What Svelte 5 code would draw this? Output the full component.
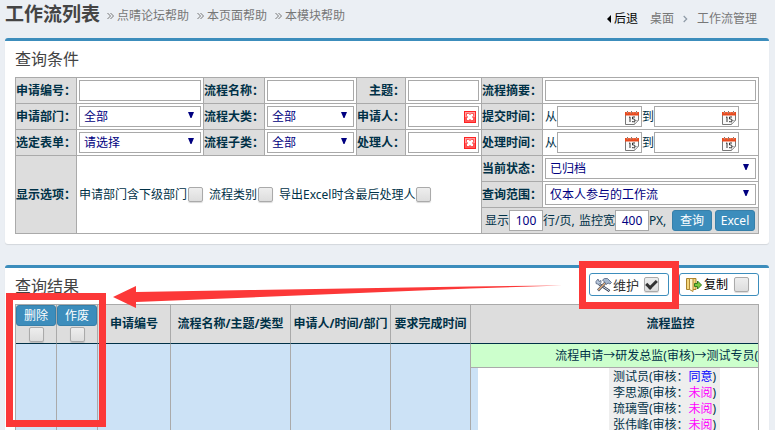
<script>
  let maintain = $state(true);
  let copy = $state(false);
  let rowsPerPage = $state('100');
  let monitorWidth = $state('400');

  const helpLinks = ['点晴论坛帮助', '本页面帮助', '本模块帮助'];
  const columns = ['申请编号', '流程名称/主题/类型', '申请人/时间/部门', '要求完成时间', '流程监控'];
  const reviewers = [
    { name: '测试员', result: '同意', done: true },
    { name: '李思源', result: '未阅', done: false },
    { name: '琉璃雪', result: '未阅', done: false },
    { name: '张伟峰', result: '未阅', done: false }
  ];
</script>

{#snippet label(id, text)}
  <th scope="row"><label for={id}>{text}：</label></th>
{/snippet}

{#snippet picker(id, value)}
  <div class="field">
    <select {id}><option>{value}</option></select>
    <svg class="arrow" width="6" height="6" viewBox="0 0 6 6"><path d="M0 0h6L3.500 6h-1z" fill="#000080" /></svg>
  </div>
{/snippet}

{#snippet person(id)}
  <div class="field">
    <input {id} type="text" />
    <button class="icon clear" aria-label="清除">
      <svg width="12" height="12" viewBox="0 0 12 12">
        <rect x=".5" y=".5" width="11" height="11" fill="#ffa0a0" stroke="#f22" />
        <path d="M1 11h10V6H1z" fill="#ff5a5a" />
        <path d="M2.500 2.500h2.200L6 3.500l1.300-1h2.200v2.200L8.500 6l1 1.300v2.200H7.300L6 8.500l-1.300 1H2.500V7.300l1-1.300-1-1.300z" fill="#fff" stroke="#f33" stroke-width=".8" />
      </svg>
    </button>
  </div>
{/snippet}

{#snippet date(name)}
  <div class="field date">
    <input type="text" aria-label={name} />
    <button class="icon cal" aria-label="选择日期">
      <svg width="14" height="14" viewBox="0 0 14 14">
        <path d="M.5 3.500h13V9.500L9.500 13.500H.5z" fill="#fafafa" stroke="#777" />
        <path d="M9.500 13.500V9.500h4z" fill="#ddd" stroke="#999" stroke-width=".7" />
        <rect y="1" width="14" height="3.500" fill="#e8481c" />
        <path d="M2.500 0v2.500M6.500 0v2.500M11.500 0v2.500" stroke="#8a7068" />
        <path d="M1.500 1.800h11" stroke="#ffab8a" stroke-width=".7" stroke-dasharray="2 1" />
        <path d="M4 6.500l1-.7v5.200M10 6H7.500v2h1.300q1.200 0 1.200 1.300T8.700 10.700H7" fill="none" stroke="#333" />
      </svg>
    </button>
  </div>
{/snippet}

{#snippet range(name)}
  <td><div class="line">
    <span class="word">从</span>{@render date(name + '从')}<span class="word">到</span>{@render date(name + '到')}
  </div></td>
{/snippet}

<div class="page">
  <header>
    <h1>工作流列表</h1>
    <nav class="help">
      {#each helpLinks as link}
        <a href="#help"><svg width="7" height="8" viewBox="0 0 7 8"><path d="M.5 1l3 3-3 3M3.500 1l3 3-3 3" fill="none" stroke="#777" /></svg>{link}</a>
      {/each}
    </nav>
    <nav class="crumbs">
      <a class="back" href="#back"><svg width="4" height="8" viewBox="0 0 4 8"><path d="M4 0v8L0 4z" /></svg>后退</a>
      <a href="#desk">桌面</a>
      <svg width="5" height="8" viewBox="0 0 5 8"><path d="M.7 1l3 3-3 3" fill="none" stroke="#8e9aa6" stroke-width="1.200" /></svg>
      <a href="#manage">工作流管理</a>
    </nav>
  </header>

  <section class="card">
    <div class="top"><h2>查询条件</h2></div>
    <table class="query">
      <colgroup>
        <col class="c61" /><col class="c127" /><col class="c61" /><col class="c92" />
        <col class="c49" /><col class="c76" /><col class="c61" /><col />
      </colgroup>
      <tbody>
        <tr>
          {@render label('no', '申请编号')}<td><input id="no" type="text" /></td>
          {@render label('name', '流程名称')}<td><input id="name" type="text" /></td>
          {@render label('subject', '主题')}<td><input id="subject" type="text" /></td>
          {@render label('summary', '流程摘要')}<td><input id="summary" type="text" /></td>
        </tr>
        <tr>
          {@render label('dept', '申请部门')}<td>{@render picker('dept', '全部')}</td>
          {@render label('major', '流程大类')}<td>{@render picker('major', '全部')}</td>
          {@render label('applicant', '申请人')}<td>{@render person('applicant')}</td>
          <th scope="row">提交时间：</th>{@render range('提交时间')}
        </tr>
        <tr>
          {@render label('form', '选定表单')}<td>{@render picker('form', '请选择')}</td>
          {@render label('minor', '流程子类')}<td>{@render picker('minor', '全部')}</td>
          {@render label('handler', '处理人')}<td>{@render person('handler')}</td>
          <th scope="row">处理时间：</th>{@render range('处理时间')}
        </tr>
        <tr>
          <th scope="row" rowspan="3">显示选项：</th>
          <td colspan="5" rowspan="3">
            <div class="options">
              <label>申请部门含下级部门<input type="checkbox" /></label>
              <label>流程类别<input type="checkbox" /></label>
              <label>导出Excel时含最后处理人<input type="checkbox" /></label>
            </div>
          </td>
          {@render label('state', '当前状态')}<td>{@render picker('state', '已归档')}</td>
        </tr>
        <tr>{@render label('scope', '查询范围')}<td>{@render picker('scope', '仅本人参与的工作流')}</td></tr>
        <tr>
          <td colspan="2" class="actions">
            <div class="line">
              <label for="rows">显示</label><input id="rows" class="num" bind:value={rowsPerPage} />
              <span class="unit">行/页,</span>
              <label for="mon">监控宽</label><input id="mon" class="num" bind:value={monitorWidth} />
              <span class="unit px">PX,</span>
              <div class="buttons">
                <button class="primary">查询</button>
                <button class="primary">Excel</button>
              </div>
            </div>
          </td>
        </tr>
      </tbody>
    </table>
  </section>

  <section class="card">
    <div class="top">
      <h2>查询结果</h2>
      <div class="tools">
        <label class="tool maintain">
          <svg width="17" height="14" viewBox="0 0 17 14" fill="none">
            <path d="M4 6L14.500 13" stroke="#333f55" stroke-width="2.600" />
            <path d="M4 6L14 12.600" stroke="#dfe5ee" />
            <path d="M1 3.500l2-2.500 1 2.500 2-1v2L4 6.500 1 5.500z" fill="#b9c8dc" stroke="#50617d" stroke-width=".8" />
            <path d="M11 4L3 12.500" stroke="#47526a" stroke-width="2.600" />
            <path d="M10.500 4.500L3.300 12" stroke="#e7b27c" stroke-width="1.200" />
            <path d="M7.500 2l2-1.500h3l4 4-1.500 1.500-2-1-1.500 1.500-2-2.500z" fill="#a4b6ce" stroke="#50617d" stroke-width=".8" />
          </svg>
          维护<input type="checkbox" bind:checked={maintain} />
        </label>
        <label class="tool">
          <svg width="16" height="14" viewBox="0 0 16 14">
            <path d="M.5.500h3.500v11H.5zM6 .500h4v11H6z" fill="#f5d67c" stroke="#a9822c" />
            <path d="M3.500.500h3.500v13l-3.500-2z" fill="#fff5cf" stroke="#b28a35" />
            <path d="M8.500 5.500h3V3l4 4-4 4V8.500h-3z" fill="#79c83f" stroke="#347b1c" />
          </svg>
          复制<input type="checkbox" bind:checked={copy} />
        </label>
      </div>
    </div>
    <div class="viewport">
      <table class="result">
        <colgroup>
          <col class="r41" /><col class="r41" /><col class="r73" /><col class="r120" />
          <col class="r100" /><col class="r80" /><col class="r400" />
        </colgroup>
        <thead>
          <tr>
            {#each ['删除', '作废'] as action}
              <th class="pick"><button class="primary">{action}</button><input type="checkbox" aria-label={action + '全选'} /></th>
            {/each}
            {#each columns as column}<th scope="col">{column}</th>{/each}
          </tr>
        </thead>
        <tbody>
          <tr class="route">
            <td rowspan="2"></td><td rowspan="2"></td><td rowspan="2"></td>
            <td rowspan="2"></td><td rowspan="2"></td><td rowspan="2"></td>
            <td class="path">流程申请→研发总监(审核)→测试专员(审核)</td>
          </tr>
          <tr>
            <td class="monitor">
              <div class="sheet">
                <ul>
                  {#each reviewers as r}
                    <li>{r.name}(审核：<span class:done={r.done}>{r.result}</span>)</li>
                  {/each}
                </ul>
              </div>
            </td>
          </tr>
        </tbody>
      </table>
    </div>
  </section>

  <svg class="marks" width="775" height="430" viewBox="0 0 775 430" aria-hidden="true">
    <g fill="none" stroke="#fc3838" stroke-width="7">
      <rect x="9.500" y="296.500" width="93" height="127" />
      <rect x="582.500" y="264.500" width="93" height="41" />
    </g>
    <path d="M113 297L136 286V292L250 290 470 286.500 562 285.500 470 288.500 250 297.500 136 302V308z" fill="#fc3838" />
  </svg>
</div>

<style>
  :global(body) { background: #ebeff4; }
  .page {
    position: relative;
    box-sizing: border-box;
    height: 100vh;
    overflow: hidden;
    padding: 0 6px 0 5px;
    font: 12px/16px "Noto Sans", "Noto Sans CJK SC", sans-serif;
    color: #003147;
  }
  .page :is(input, select, button) { font: inherit; box-sizing: border-box; margin: 0; }
  header { display: flex; height: 38px; align-items: flex-start; }
  h1 { margin: 0; font-size: 19px; line-height: 28px; font-weight: 700; color: #444; white-space: nowrap; }
  nav { display: flex; white-space: nowrap; }
  a { color: #777; text-decoration: none; }
  .help { margin: 8px 0 0 7px; gap: 8px; }
  .help a { display: flex; align-items: center; gap: 3px; }
  .crumbs { margin: 11px 12px 0 auto; align-items: center; gap: 9px; }
  .crumbs .back { display: flex; align-items: center; gap: 3px; color: #000; margin-right: 3px; }
  .card {
    background: #fff;
    border-top: 3px solid #3c8dbc;
    border-radius: 3px;
    box-shadow: 0 1px 1px rgba(0, 0, 0, .1);
    padding: 0 10px 10px;
    margin-bottom: 21px;
  }
  .top { display: flex; justify-content: space-between; height: 36px; }
  h2 { margin: 0; font-size: 16px; line-height: 36px; font-weight: 400; color: #444; }

  .query { width: 100%; table-layout: fixed; border-collapse: collapse; }
  .query tr { height: 26px; }
  .query th, .query td { border: 1px solid #aaa; padding: 0; }
  .query td { padding: 0 2px; }
  .query th { background: #ddd; text-align: right; font-weight: 700; white-space: nowrap; }
  .c61 { width: 61px; }
  .c127 { width: 127px; }
  .c92 { width: 92px; }
  .c49 { width: 49px; }
  .c76 { width: 76px; }
  input:not([type="checkbox"]), select {
    display: block;
    width: 100%;
    height: 21px;
    padding: 0 4px;
    border: 1px solid #a9a9a9;
    border-radius: 0;
    background: #fff;
    color: #000080;
    appearance: none;
  }
  .field { position: relative; }
  .arrow { position: absolute; right: 7px; top: 6px; pointer-events: none; }
  .icon { position: absolute; display: flex; right: 3px; top: 5px; padding: 0; border: 0; background: none; }
  .line { display: flex; align-items: center; }
  .word { width: 12px; }
  .date { width: 85px; }
  .options { display: flex; gap: 6px; white-space: nowrap; }
  .options label { display: flex; align-items: center; gap: 1px; }
  input[type="checkbox"] {
    appearance: none;
    flex: none;
    width: 15px;
    height: 15px;
    border: 1px solid #aaa;
    border-radius: 2px;
    background: linear-gradient(#eee, #ddd);
    box-shadow: 0 1px 1px rgba(0, 0, 0, .15);
  }
  input[type="checkbox"]:checked::after {
    content: "";
    display: block;
    box-sizing: border-box;
    width: 11px;
    height: 7px;
    margin: 2px 0 0 1px;
    border: solid #333;
    border-width: 0 0 3px 3px;
    transform: rotate(-45deg);
  }
  .actions { background: #ddd; white-space: nowrap; }
  .actions .line { padding-left: 1px; }
  .page .actions .num { width: 34px; flex: none; text-align: center; padding: 0; }
  .unit { width: 36px; }
  .unit.px { width: 23px; }
  .buttons { display: flex; gap: 3px; }
  .primary {
    width: 40px;
    height: 21px;
    padding: 0;
    border: 1px solid #367fa9;
    border-radius: 3px;
    background: #3c8dbc;
    color: #fff;
  }

  .tools { display: flex; gap: 10px; padding-top: 5px; }
  .tool {
    display: flex;
    align-items: center;
    box-sizing: border-box;
    width: 80px;
    height: 23px;
    padding-left: 6px;
    border: 1px solid #3c8dbc;
    border-radius: 3px;
    background: #fff;
    color: #000;
    white-space: nowrap;
  }
  .tool svg { margin-right: 2px; flex: none; }
  .tool input { margin-left: 6px; }
  .maintain { padding-left: 5px; font-size: 13px; color: #333; }
  .maintain svg { margin-right: 1px; }
  .maintain input { margin-left: 5px; }

  .viewport { overflow: hidden; border: 1px solid #aaa; border-bottom: 0; }
  .result { width: 855px; table-layout: fixed; border-collapse: separate; border-spacing: 0; }
  .r41 { width: 41px; }
  .r73 { width: 73px; }
  .r120 { width: 120px; }
  .r100 { width: 100px; }
  .r80 { width: 80px; }
  .r400 { width: 400px; }
  .result th, .result td { padding: 0; border-right: 1px solid #aaa; text-align: center; white-space: nowrap; }
  .result th { height: 38px; background: #ddd; border-bottom: 1px solid #003147; }
  .result .pick { vertical-align: top; font-weight: 400; }
  .pick .primary { display: block; }
  .pick input { display: block; margin: 1px auto 0; }
  .result td { background: #cce2f6; }
  .result .path { height: 23px; background: #cfc; border-bottom: 1px solid #aaa; }
  .result .monitor { height: 160px; padding: 0 19px 0 7px; }
  .sheet { display: flex; justify-content: center; align-items: flex-start; min-height: 160px; background: #fff; }
  ul { margin: 0; padding: 1px 4px; list-style: none; background: #eee; }
  li span { color: #f0f; }
  li .done { color: #00f; }
  .marks { position: absolute; left: 0; top: 0; pointer-events: none; }
</style>
